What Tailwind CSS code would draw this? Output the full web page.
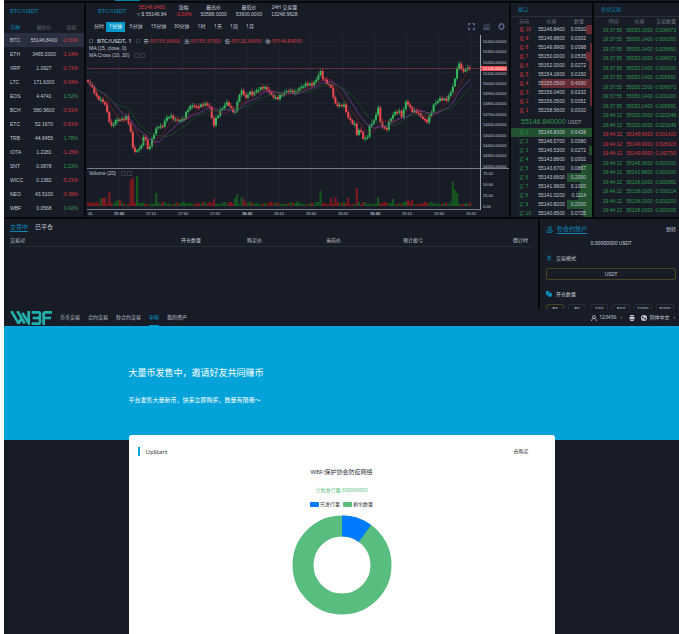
<!DOCTYPE html>
<html lang="zh-CN">
<head>
  <meta charset="UTF-8" />
  <meta name="viewport" content="width=device-width, initial-scale=1.0" />
  <title>WBF</title>
  <script src="https://cdn.jsdelivr.net/npm/@tailwindcss/browser@4"></script>
</head>
<body class="bg-white pl-1 min-h-screen flex flex-col font-['Noto_Sans','Noto_Sans_CJK_SC',sans-serif] text-[5px] leading-none text-[#c3c7d4] whitespace-nowrap">

  <!-- Trading screen -->
  <main class="bg-[#08090d]">
    <div class="h-px bg-[#181c27] pl-[111px]"><div class="w-[25px] h-px bg-[#0883b0]"></div></div>

    <div class="grid grid-cols-[80px_minmax(0,1fr)_81px_85px] gap-0.5 pt-0.5">
      <!-- Market list -->
      <section class="bg-[#181c27] h-[214px]">
        <h2 class="h-[19px] px-1.5 pt-[5px] text-[6px] text-[#0d86b5]">BTC/USDT</h2>
        <table class="w-full table-fixed font-['Liberation_Sans','Noto_Sans_CJK_SC',sans-serif]">
          <thead>
            <tr class="h-[11px] text-[#5c606c]">
              <th class="w-[24px] pl-1.5 text-left font-normal text-[#0d86b5]">币种</th>
              <th class="font-normal">最新价</th>
              <th class="w-[24px] pr-2 text-right font-normal">涨幅</th>
            </tr>
          </thead>
          <tbody id="markets"></tbody>
        </table>
      </section>

      <!-- Chart -->
      <section class="bg-[#181c27] flex flex-col">
        <div class="flex items-center h-[16px] pl-3 gap-[9px] text-center font-['Liberation_Sans','Noto_Sans_CJK_SC',sans-serif]">
          <h1 class="mr-0.5 text-[6px] text-[#0d86b5] font-['Noto_Sans',sans-serif]">BTC/USDT</h1>
          <div><p class="h-[7px] text-[#d8393f]">55146.8400</p><p>≈ $ 55146.84</p></div>
          <div><p class="h-[7px]">涨幅</p><p class="text-[#e0343b]">-2.00%</p></div>
          <div><p class="h-[7px]">最高价</p><p>50588.0000</p></div>
          <div><p class="h-[7px]">最低价</p><p>53900.0000</p></div>
          <div><p class="h-[7px]">24H 交易量</p><p>13248.9628</p></div>
        </div>
        <div class="flex items-center h-[15px] pl-1.5 pr-1">
          <button class="w-[14px] h-2.5">分时</button>
          <button class="w-[19px] h-2.5 bg-[#0698cb] text-white">1分钟</button>
          <button class="w-[22px] h-2.5">5分钟</button>
          <button class="w-[23px] h-2.5">15分钟</button>
          <button class="w-[23px] h-2.5">30分钟</button>
          <button class="w-[17px] h-2.5">1时</button>
          <button class="w-[16px] h-2.5">1天</button>
          <button class="w-[16px] h-2.5">1周</button>
          <button class="w-[16px] h-2.5">1月</button>
          <div class="ml-auto flex items-center gap-2 text-[#5a6488]">
            <button aria-label="全屏"><svg class="size-[7px]" viewBox="0 0 14 14" fill="none" stroke="currentColor" stroke-width="2"><path d="M1 5V1h4M9 1h4v4M13 9v4H9M5 13H1V9M1 1l3 3M13 1l-3 3M13 13l-3-3M1 13l3-3" /></svg></button>
            <button aria-label="指标"><svg class="size-[7px]" viewBox="0 0 14 14" fill="none" stroke="currentColor" stroke-width="1.6"><path d="M0 12.500h14M2 12V8M5.500 12V6M9 12V8M12.500 12V4M1 6l4-3 3 2 5-4" /></svg></button>
            <button aria-label="设置"><svg class="size-[7px]" viewBox="0 0 14 14" fill="none" stroke="currentColor" stroke-width="3"><path d="M4.500 2h5L12 7l-2.500 5h-5L2 7z" /></svg></button>
          </div>
        </div>
        <div class="relative">
          <svg id="chart" class="block w-full font-['Liberation_Sans','Noto_Sans_CJK_SC',sans-serif]" viewBox="0 0 423 183"></svg>
          <div class="absolute left-[3px] top-1 flex flex-col gap-0.5">
            <div class="flex items-center gap-1 h-[6px]">
              <span class="size-1 border border-[#4a4e5c]"></span>
              <span class="text-[6px] text-[#dfe2ea]">BTC/USDT, 1</span>
              <span class="size-1 border border-[#373b48]"></span>
              <span>开-<span class="text-[#d8393f]">55155.36000</span></span>
              <span>高-<span class="text-[#d8393f]">55155.37000</span></span>
              <span>低-<span class="text-[#d8393f]">55128.36000</span></span>
              <span>收-<span class="text-[#d8393f]">55146.84000</span></span>
            </div>
            <p class="font-['Liberation_Sans',sans-serif]">MA (15, close, 0)</p>
            <div class="flex items-center gap-px font-['Liberation_Sans',sans-serif]"><span class="pr-1">MA Cross (10, 20)</span><span class="size-[5px] border border-[#373b48]"></span><span class="size-[5px] border border-[#373b48]"></span></div>
          </div>
          <div class="absolute left-[3px] top-[137px] flex items-center gap-px font-['Liberation_Sans',sans-serif]"><span class="pr-1">Volume (20)</span><span class="size-[5px] border border-[#373b48]"></span><span class="size-[5px] border border-[#373b48]"></span></div>
        </div>
      </section>

      <!-- Order book -->
      <section class="bg-[#181c27] overflow-hidden h-[214px]">
        <h2 class="h-[14px] pl-[7px] pt-1 border-b border-[#292e3b] text-[#0d86b5]">盘口</h2>
        <table class="w-full table-fixed font-['Liberation_Sans','Noto_Sans_CJK_SC',sans-serif]">
          <thead>
            <tr class="h-[8px] text-[#737784]">
              <th class="w-[26px] font-normal">方向</th>
              <th class="font-normal">价格</th>
              <th class="w-[26px] pr-2 text-right font-normal">数量</th>
            </tr>
          </thead>
          <tbody id="asks"></tbody>
          <tbody><tr class="h-[13px]"><td colspan="3" class="pl-2.5 text-[7px] text-[#2f9a4b]">55146.840000 <span class="text-[5px] text-[#a4a8b4]">USDT</span></td></tr></tbody>
          <tbody id="bids"></tbody>
        </table>
      </section>

      <!-- Trades -->
      <section class="bg-[#181c27] overflow-hidden h-[214px]">
        <h2 class="h-[14px] pl-[7px] pt-1 border-b border-[#292e3b] text-[#0d86b5]">全站交易</h2>
        <table class="w-full table-fixed font-['Liberation_Sans','Noto_Sans_CJK_SC',sans-serif]">
          <thead>
            <tr class="h-[8px] text-[#737784]">
              <th class="w-[31px] pl-2 font-normal">时间</th>
              <th class="font-normal">价格</th>
              <th class="w-[25px] pr-[3px] text-right font-normal">交易数量</th>
            </tr>
          </thead>
          <tbody id="trades"></tbody>
        </table>
      </section>
    </div>

    <div class="grid grid-cols-[minmax(0,1fr)_139px] gap-0.5 pt-0.5 h-[92px]">
      <!-- Positions -->
      <section class="bg-[#181c27] px-1.5 pt-[5px]">
        <div class="flex gap-[7px] text-[6px] h-[11px] items-start">
          <button class="border-b border-[#0d86b5] pb-px text-[#0d86b5]">交易中</button>
          <button class="pb-px">已平仓</button>
        </div>
        <table class="w-full table-fixed">
          <thead>
            <tr class="h-[11px] border-b border-[#232d3a] text-left">
              <th class="w-[171px] font-normal">交易对</th>
              <th class="w-[66px] font-normal">开仓数量</th>
              <th class="w-[79px] font-normal">购买价</th>
              <th class="w-[77px] font-normal">当前价</th>
              <th class="font-normal">预计盈亏</th>
              <th class="w-[40px] pr-1 text-right font-normal">倒计时</th>
            </tr>
          </thead>
        </table>
      </section>

      <!-- Account -->
      <section class="bg-[#181c27] overflow-hidden pl-1.5 pr-[3px] pt-1.5">
        <div class="flex items-center h-[9px]">
          <svg class="size-[7px] text-[#0d86b5]" viewBox="0 0 16 16" fill="none" stroke="currentColor" stroke-width="2"><circle cx="9" cy="4" r="3" /><path d="M1 11c3-3 5 1 8 0l5-2M1 14.500h12l2-4" /></svg>
          <a href="#" class="ml-1 border-b border-[#0d86b5] pb-px text-[6px] text-[#0d86b5]">秒合约账户</a>
          <button class="ml-auto">划转</button>
        </div>
        <p class="h-[18px] pt-[7px] text-center text-[#d5d8e0]">0.00000000 USDT</p>
        <div class="flex items-center gap-1 h-[12px]">
          <svg class="size-[6px] text-[#0d86b5]" viewBox="0 0 12 12" fill="none" stroke="currentColor" stroke-width="1"><path d="M6 0v12M1 3l10 6M11 3L1 9M3.500 1.500L6 4l2.500-2.500M3.500 10.500L6 8l2.500 2.500" /></svg>
          <span>交易模式</span>
        </div>
        <button class="mt-1 block w-full h-[12px] rounded-[2px] border border-[#4a4320]">USDT</button>
        <div class="mt-2 flex items-center gap-1 h-[12px]">
          <svg class="size-[6px] text-[#0698cb]" viewBox="0 0 12 12" fill="currentColor"><rect width="7" height="9" rx="2" /><rect x="4" y="3" width="8" height="9" rx="2" stroke="#181c27" /></svg>
          <span>开仓数量</span>
        </div>
        <div class="mt-1 flex gap-1">
          <button class="w-[18px] h-[11px] rounded-[2px] border border-[#4a4320]">50</button>
          <button class="w-[18px] h-[11px] rounded-[2px] border border-[#292e3b]">80</button>
          <button class="w-[18px] h-[11px] rounded-[2px] border border-[#292e3b]">100</button>
          <button class="w-[18px] h-[11px] rounded-[2px] border border-[#292e3b]">500</button>
          <button class="w-[18px] h-[11px] rounded-[2px] border border-[#292e3b]">1000</button>
          <button class="w-[18px] h-[11px] rounded-[2px] border border-[#292e3b]">5000</button>
        </div>
      </section>
    </div>
  </main>

  <!-- Navigation -->
  <header class="flex items-center h-[17px] bg-[#181c27] pl-1.5 pr-1">
    <a href="#" aria-label="WBF">
      <svg class="w-[42px] h-[14px]" viewBox="0 0 126 42" fill="none" stroke="#20b2ac" stroke-width="8">
        <path d="M4 0l22 38M22 0l22 38M37 6l19 30V0M26 38l7-14" />
        <path d="M65 4h20c5 0 5 2 5 6v5c0 4-2 6-6 6H68M84 21c5 0 6 2 6 6v5c0 4-2 6-6 6H65" />
        <path d="M126 4h-21c-3 0-4 1-4 4v34M101 21h22" />
      </svg>
    </a>
    <nav class="ml-2 flex h-full gap-2">
      <a href="#" class="flex items-center">币币交易</a>
      <a href="#" class="flex items-center">合约交易</a>
      <a href="#" class="flex items-center">秒合约交易</a>
      <a href="#" class="flex items-center border-b border-[#0698cb] text-[#0698cb]">申购</a>
      <a href="#" class="flex items-center">我的资产</a>
    </nav>
    <div class="ml-auto flex items-center">
      <svg class="size-[6px]" viewBox="0 0 12 12" fill="none" stroke="currentColor" stroke-width="1.500"><circle cx="6" cy="4" r="3" /><path d="M1 12c0-7 10-7 10 0" /></svg>
      <a href="#" class="ml-0.5">123456</a>
      <span class="ml-1 w-[9px]">‹</span>
      <svg class="size-[6px]" viewBox="0 0 14 14" fill="currentColor"><path d="M3 0h8v3H3zM1 4h12v6H1zM3 11h8v3H3z" /></svg>
      <svg class="ml-1.5 size-[6px]" viewBox="0 0 12 12"><circle cx="6" cy="6" r="6" fill="currentColor" /><path d="M3 3l3 1-1 3-3-1zM7 6l3 0-1 4-2-1z" fill="#181c27" /></svg>
      <a href="#" class="ml-0.5">简体中文</a>
      <span class="ml-1">‹</span>
    </div>
  </header>

  <!-- Launch banner -->
  <section class="h-[114px] bg-[#03a3da] text-white">
    <div class="mx-auto w-[426px] pt-[42px]">
      <h2 class="text-[9px]">大量币发售中，邀请好友共同赚币</h2>
      <p class="mt-5 text-[6px]">平台发售大量新币，快来立即购买，数量有限哦～</p>
    </div>
  </section>

  <section class="flex grow bg-[#181c27]">
    <div class="relative mx-auto -mt-[5px] w-[426px] rounded-t-[3px] bg-white px-[9px] pt-3 text-[#33363d]">
      <div class="flex items-center justify-between pr-[17px]">
        <h3 class="flex h-[9px] items-center border-l-2 border-[#03a3da] pl-1.5 text-[6px]">UpStart</h3>
        <a href="#" class="text-[#222]">去购买</a>
      </div>
      <div class="flex flex-col items-center">
        <h4 class="mt-[13px] text-[6px]">WBF:保护协会防疫网络</h4>
        <p class="mt-[13px] text-[#58bd7e]">计划发行量:300000000</p>
        <div class="mt-[9px] flex items-center gap-px">
          <span class="w-[9px] h-[5px] rounded-[1px] bg-[#007bff]"></span><span class="pr-0.5">已发行量</span>
          <span class="w-[9px] h-[5px] rounded-[1px] bg-[#58bd7e]"></span><span>剩余数量</span>
        </div>
        <!-- 10% issued, 90% left -->
        <svg class="mt-2 size-[100px] -rotate-90" viewBox="0 0 100 100" fill="none" stroke-width="21">
          <circle cx="50" cy="50" r="39" stroke="#58bd7e" />
          <circle cx="50" cy="50" r="39" stroke="#007bff" pathLength="100" stroke-dasharray="10 90" />
        </svg>
      </div>
    </div>
  </section>

  <script>
    const $ = id => document.getElementById(id);

    const markets = [
      ['BTC', '55146.8400', '-2.00%'], ['ETH', '3465.0300', '-1.14%'], ['XRP', '1.0927', '-0.71%'],
      ['LTC', '171.6300', '-0.04%'], ['EOS', '4.4741', '0.52%'], ['BCH', '580.9600', '-0.51%'],
      ['ETC', '52.1670', '-0.81%'], ['TRB', '44.8455', '1.78%'], ['IOTA', '1.2281', '-1.15%'],
      ['SNT', '0.0878', '2.23%'], ['WICC', '0.1382', '-5.21%'], ['NEO', '43.5100', '-0.39%'], ['WBF', '0.0568', '0.42%'],
    ];
    $('markets').innerHTML = markets.map(([name, price, change], i) => `
      <tr class="h-[14px] ${i === 0 ? 'bg-[#2b3040]' : ''}">
        <td class="pl-1.5">${name}</td>
        <td class="text-center">${price}</td>
        <td class="pr-1.5 text-right ${change[0] === '-' ? 'text-[#d8393f]' : 'text-[#2f9a4b]'}">${change}</td>
      </tr>`).join('');

    // side number, price, amount, depth in % of the row
    const asks = [
      [10, '55146.8400', '0.0500', 8], [9, '55146.8800', '0.0002', 0], [8, '55149.9900', '0.0098', 2],
      [7, '55150.0000', '0.0535', 8], [6, '55152.0000', '0.0272', 4], [5, '55154.1800', '0.0150', 3],
      [4, '55155.0500', '0.4000', 63], [3, '55156.0400', '0.0232', 3], [2, '55156.0500', '0.0051', 2], [1, '55158.5600', '0.0010', 0],
    ];
    const bids = [
      [1, '55146.8300', '0.6428', 100], [2, '55146.5700', '0.0080', 0], [3, '55146.5300', '0.0272', 4],
      [4, '55143.8800', '0.0002', 0], [5, '55143.6700', '0.0867', 13], [6, '55143.6600', '0.2000', 31],
      [7, '55141.9600', '0.1000', 15], [8, '55141.0200', '0.1114', 17], [9, '55140.8200', '0.2000', 31], [10, '55140.6500', '0.0725', 11],
    ];
    const bookRow = (label, color, bar) => ([n, price, amount, depth]) => `
      <tr class="relative h-[9px]">
        <td class="pl-2 ${color}"><span class="absolute right-0 inset-y-0 ${bar}" style="width:${depth}%"></span><span class="relative">${label} ${n}</span></td>
        <td class="relative text-center">${price}</td>
        <td class="relative pr-1.5 text-right">${amount}</td>
      </tr>`;
    $('asks').innerHTML = asks.map(bookRow('卖', 'text-[#d8393f]', 'bg-[#672b34]')).join('');
    $('bids').innerHTML = bids.map(bookRow('买', 'text-[#2f9a4b]', 'bg-[#21512f]')).join('');

    const trades = [
      ['19:37:55', '55050.1500', '0.006973'], ['19:37:55', '55050.1400', '0.000200'], ['19:37:55', '55050.1400', '0.005891'],
      ['19:37:55', '55050.1500', '0.006973'], ['19:37:55', '55050.1400', '0.000200'], ['19:37:55', '55050.1400', '0.005891'],
      ['19:37:55', '55050.1500', '0.006973'], ['19:37:55', '55050.1400', '0.000200'], ['19:37:55', '55050.1400', '0.005891'],
      ['19:44:12', '55150.0000', '0.023249'], ['19:44:12', '55150.0000', '0.023249'],
      ['19:44:12', '55149.9900', '0.001420', 1], ['19:44:12', '55149.9900', '0.028323', 1], ['19:44:12', '55149.9900', '0.142750', 1],
      ['19:44:12', '55148.3600', '0.001000'], ['19:44:12', '55142.8800', '0.000200'], ['19:44:12', '55138.0300', '0.002681'],
      ['19:44:12', '55138.0300', '0.000114'], ['19:44:12', '55138.0300', '0.000200'], ['19:44:12', '55138.0300', '0.000205'],
    ];
    $('trades').innerHTML = trades.map(([time, price, amount, sell]) => `
      <tr class="odd:h-[10px] even:h-[9px] ${sell ? 'text-[#d8393f]' : 'text-[#2f9a4b]'}">
        <td class="pr-[3px] text-right">${time}</td>
        <td class="text-center">${price}</td>
        <td class="pr-[3px] text-right">${amount}</td>
      </tr>`).join('');

    // Chart: turning points of the price line as [x, y] in plot units
    const points = [
      [2, 48], [4, 50], [7, 55], [11, 64], [15, 66], [19, 70], [22, 82], [25, 93], [28, 89], [31, 85], [34, 86], [38, 85], [40, 82],
      [43, 90], [45, 100], [47, 115], [50, 119], [53, 114], [56, 112], [57, 101], [60, 107], [62, 116], [65, 110], [67, 101],
      [70, 96], [73, 91], [76, 94], [79, 86], [83, 82], [86, 83], [89, 86], [97, 86], [102, 75], [106, 71], [111, 73], [119, 70],
      [124, 73], [127, 93], [130, 85], [134, 77], [141, 68], [145, 75], [149, 79], [152, 64], [156, 56], [160, 65], [163, 57], [166, 61],
      [171, 56], [177, 53], [181, 55], [185, 61], [191, 65], [195, 61], [202, 56], [208, 59], [214, 54], [220, 50], [226, 51], [231, 45],
      [234, 36], [236, 43], [241, 49], [245, 53], [249, 70], [254, 72], [258, 71], [261, 81], [265, 88], [269, 91], [271, 101],
      [274, 94], [276, 101], [278, 107], [282, 101], [284, 91], [289, 85], [292, 72], [294, 88], [297, 93], [300, 97], [303, 88],
      [308, 79], [313, 77], [316, 83], [320, 67], [326, 77], [331, 78], [336, 84], [341, 88], [345, 79], [348, 70], [354, 65],
      [361, 66], [366, 55], [369, 45], [372, 29], [375, 33], [377, 39], [381, 33], [384, 35],
    ];
    const spikes = { 14: 8, 18: 8, 24: 14, 31: 6, 34: 6, 45: 26, 47: 28, 50: 30, 71: 13, 127: 7, 150: 8, 152: 12, 155: 9, 157: 7, 235: 15, 246: 8, 250: 9, 263: 8, 270: 18, 293: 9, 308: 7, 323: 6, 326: 6, 367: 24, 369: 16, 371: 13 };
    const step = 32 / 15;
    const levelAt = x => {
      const k = Math.max(1, points.findIndex(p => p[0] >= x));
      const [x0, y0] = points[k - 1], [x1, y1] = points[k];
      return y0 + (y1 - y0) * (x - x0) / (x1 - x0);
    };
    let plot = '';
    // grid
    for (let i = 1; i <= 12; i++) plot += `<path d="M${1 + i * 32} 1V173" stroke="#222735"/>`;
    for (let i = 0; i < 13; i++) plot += `<path d="M1 ${Math.round(7 + i * 10.4)}.5H394" stroke="#1d222e"/>`;
    const closes = [];
    let open = 46;
    for (let i = 0; 2 + i * step <= 384; i++) {
      const x = 2 + i * step;
      const close = levelAt(x) + Math.sin(i * 2.7) * 1.1;
      closes.push([x, close]);
      const up = close < open;
      const color = up ? '#35b85c' : '#f04a50';
      const top = Math.min(open, close), h = Math.max(1.5, Math.abs(open - close));
      const wick = 1 + Math.abs(Math.sin(i * 1.9)) * 2;
      plot += `<path d="M${x} ${top - wick}V${top + h + wick * .7}" stroke="${color}" stroke-width=".6"/>`;
      plot += `<rect x="${x - 1}" y="${top}" width="2" height="${h}" fill="${color}"/>`;
      let v = 1.5 + Math.abs(Math.sin(i * 1.3) + Math.cos(i * .7)) * 1.5;
      for (const s in spikes) if (Math.abs(s - x) < step / 2) v = spikes[s];
      plot += `<rect x="${x - 1.07}" y="${172 - v}" width="2.14" height="${v}" fill="${up ? '#17561f' : '#7d191e'}"/>`;
      open = close;
    }
    const average = n => closes.map(([x], i) => {
      const part = closes.slice(Math.max(0, i - n + 1), i + 1);
      return `${x},${part.reduce((sum, c) => sum + c[1], 0) / part.length}`;
    }).join(' ');
    plot += `<polyline points="${average(8)}" fill="none" stroke="#8f1e2d" stroke-width=".7"/>`;
    plot += `<polyline points="${average(13)}" fill="none" stroke="#7c3d96" stroke-width=".8"/>`;
    plot += `<polyline points="${average(19)}" fill="none" stroke="#1a5528" stroke-width=".7"/>`;
    // last price, pane borders, scales
    plot += '<path d="M1 34.5H394" stroke="#b5404c" stroke-width=".7" stroke-dasharray="1.5 .7"/>';
    plot += '<path d="M1 134.5H423M1 175.5H394.5" stroke="#777c8e"/><path d="M394.5 1V176" stroke="#9a9eae"/>';
    for (let i = 0; i < 13; i++) {
      const y = i === 3 ? 41 : Math.round(9 + i * 10.4);
      plot += `<text x="397" y="${y}" font-size="4" fill="#c3c7d4">${55400 - i * 100}.00000</text>`;
    }
    plot += '<rect x="395" y="32" width="26" height="5" fill="#f0474e"/><text x="397" y="36" font-size="4" fill="#fff">55146.84000</text>';
    ['75.00', '50.00', '25.00', '0.00'].forEach((t, i) => {
      plot += `<text x="397" y="${141 + i * 11}" font-size="4" fill="#c3c7d4">${t}</text>`;
    });
    plot += '<text x="2" y="181" font-size="4" fill="#c3c7d4">45</text>';
    ['17:00', '17:15', '17:30', '17:45', '18:00', '18:15', '18:30', '18:45', '19:00', '19:15', '19:30', '19:45'].forEach((t, i) => {
      plot += `<text x="${33 + i * 32}" y="181" font-size="4" text-anchor="middle" fill="#c3c7d4" ${t.endsWith('00') ? 'font-weight="bold"' : ''}>${t}</text>`;
    });
    $('chart').innerHTML = plot;
  </script>
</body>
</html>
